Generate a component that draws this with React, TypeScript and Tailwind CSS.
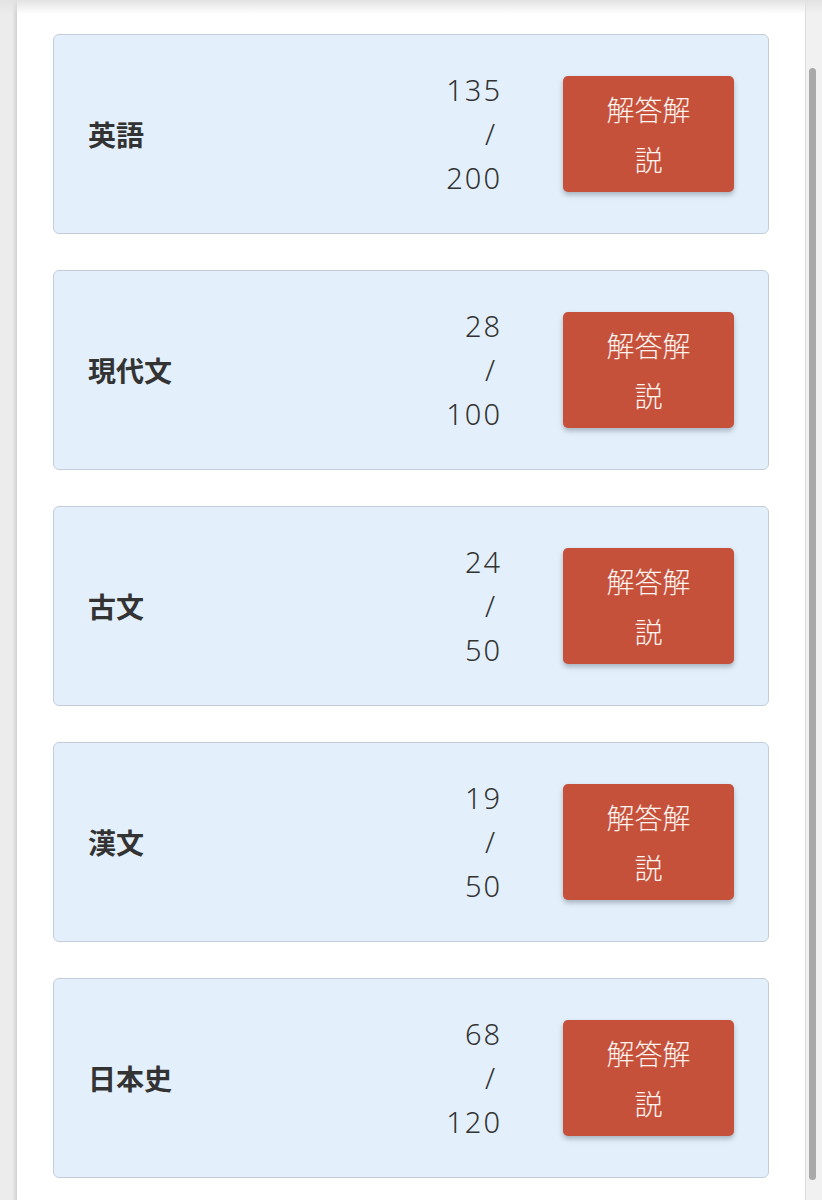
const subjects = [
  { name: '英語', score: 135, max: 200 },
  { name: '現代文', score: 28, max: 100 },
  { name: '古文', score: 24, max: 50 },
  { name: '漢文', score: 19, max: 50 },
  { name: '日本史', score: 68, max: 120 },
]

function ScoreCard({ name, score, max }: { name: string; score: number; max: number }) {
  return (
    <div className="flex h-[200px] items-center rounded-[6px] border border-[#c3cdd9] bg-[#e3f0fb] pl-[34px] pr-[34px]">
      <span className="flex-1 text-[28px] font-bold text-[#333]">{name}</span>
      <div className="mr-[-2px] flex flex-col items-end font-['Noto_Sans',sans-serif] text-[29px] leading-[44px] font-light tracking-[2px] text-[#333]">
        <span>{score}</span>
        <span className="pr-[5px]">/</span>
        <span>{max}</span>
      </div>
      <button className="ml-[63px] h-[116px] w-[171px] rounded-[5px] bg-[#c6513b] px-[38px] text-[28px] leading-[50px] font-light text-[#fdf4f0] shadow-[0_3px_5px_rgba(60,70,90,0.35)]">
        解答解説
      </button>
    </div>
  )
}

export default function App() {
  return (
    <div
      className="relative flex h-[1200px] w-[822px] overflow-hidden bg-white"
      style={{ fontFamily: '"Noto Sans CJK JP", "Noto Sans", sans-serif' }}
    >
      <div className="h-full w-[17px] bg-gradient-to-r from-[#ececec] from-70% to-[#d2d2d2]" />
      <main className="flex flex-1 flex-col gap-[36px] px-[36px] pt-[34px]">
        {subjects.map((s) => (
          <ScoreCard key={s.name} {...s} />
        ))}
      </main>
      <div className="relative h-full w-[17px] border-l border-[#dcdcdc] bg-[#f1f1f1]">
        <div className="absolute top-[68px] left-[3px] h-[1112px] w-[7px] rounded-full bg-[#a9a9a9]" />
      </div>
      <div className="pointer-events-none absolute top-0 left-0 h-[14px] w-full bg-gradient-to-b from-[#e2e2e2] to-transparent" />
    </div>
  )
}
